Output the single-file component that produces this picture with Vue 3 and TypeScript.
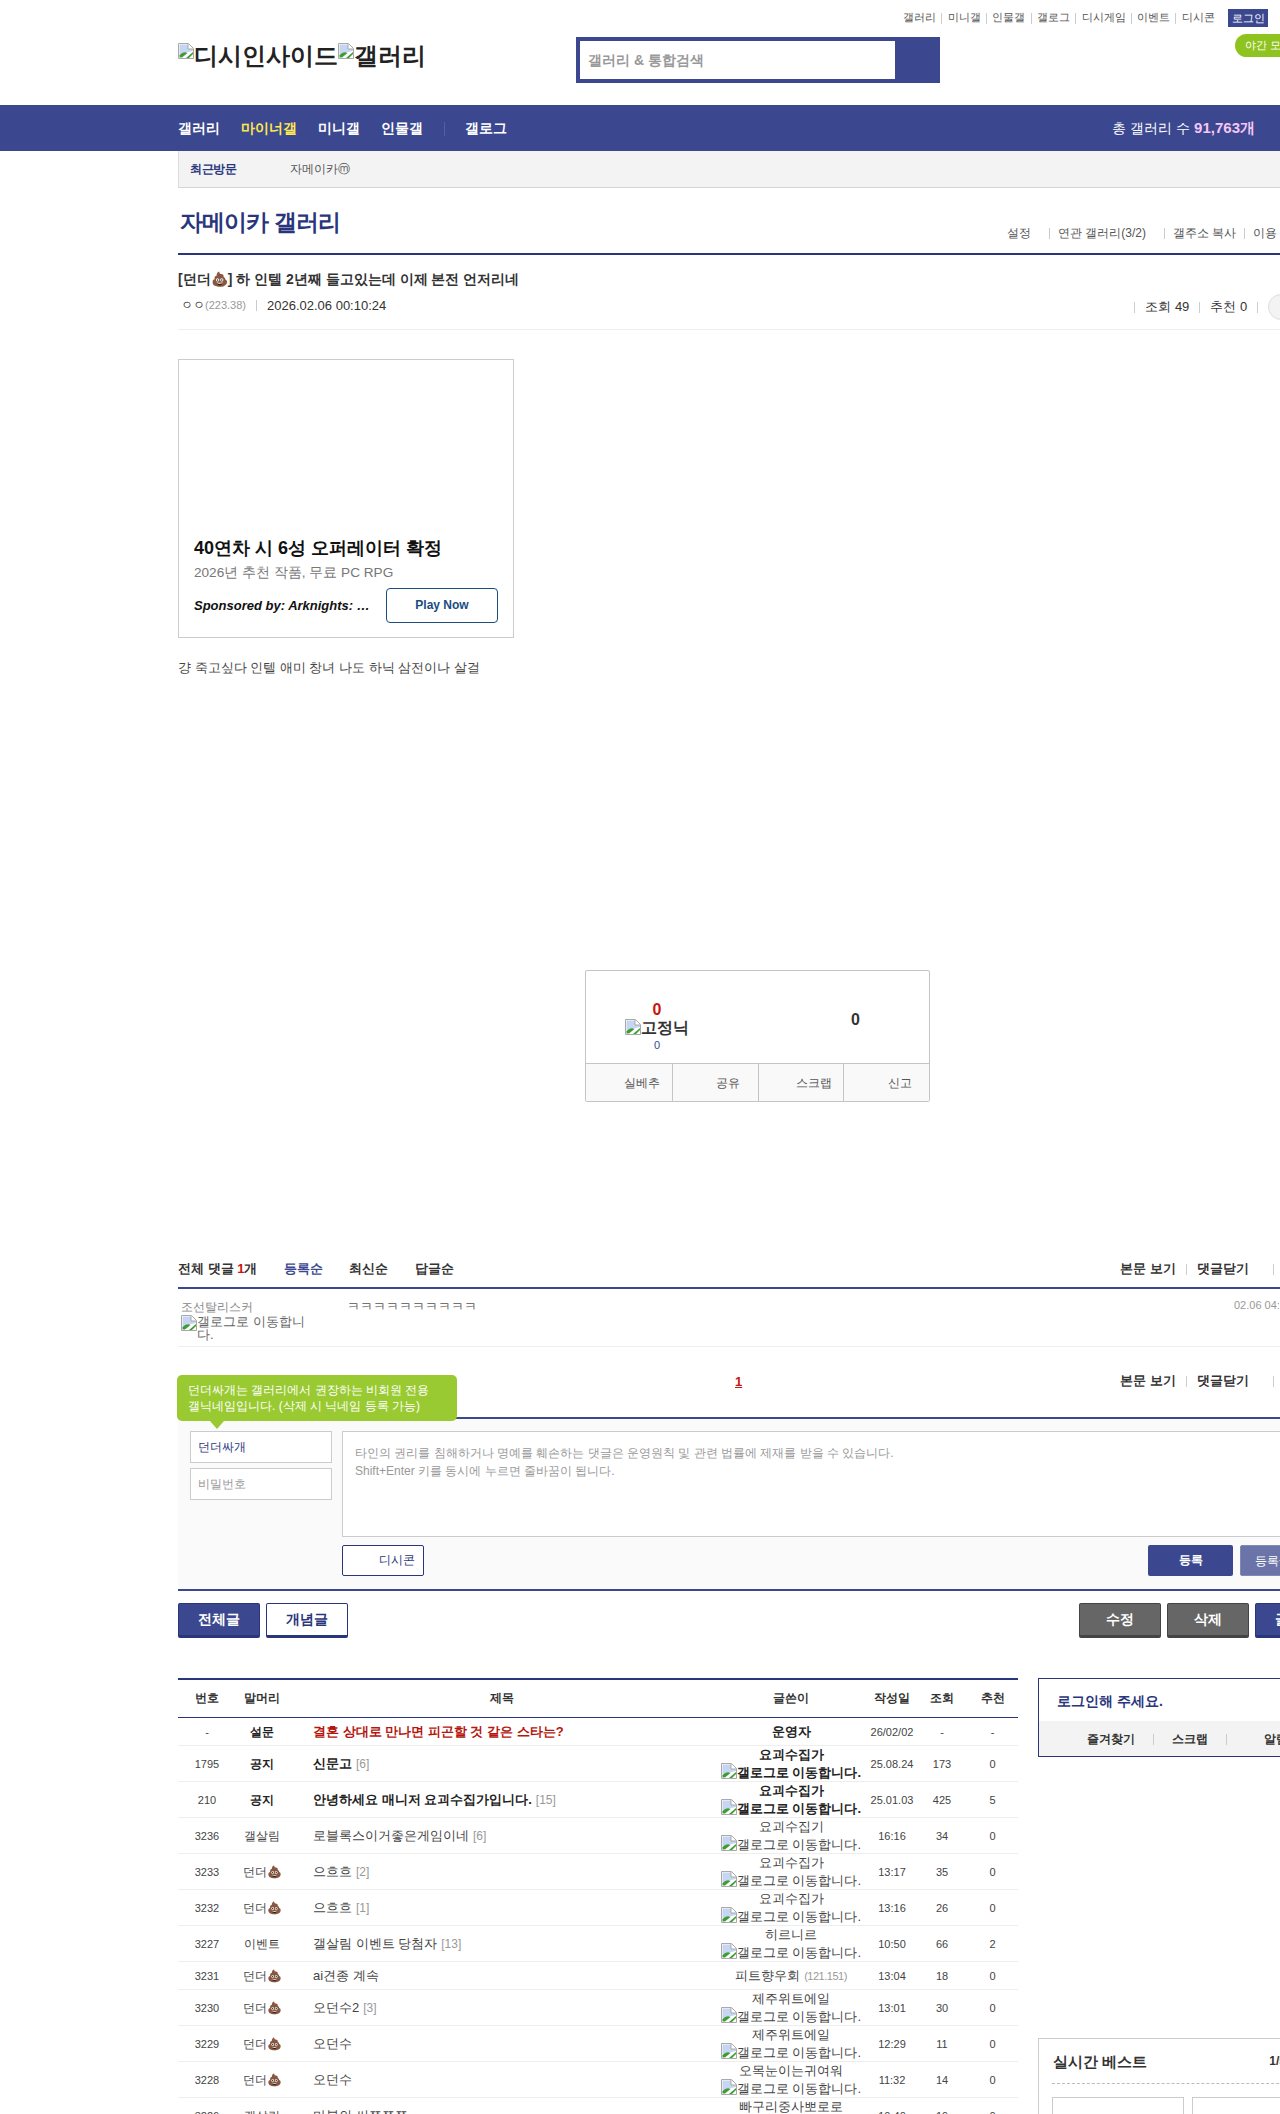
<script setup lang="ts">
import { h } from "vue";

//깨진 이미지 아이콘 (원본에서 이미지가 로드되지 않은 자리)
const BrokenImg = () =>
  h("svg", { class: "broken", width: 16, height: 16, viewBox: "0 0 16 16" }, [
    h("path", { d: "M.5.5H10.5L15.5 5.5V15.5H.5Z", fill: "#fff", stroke: "#a9a9a9" }),
    h("path", { d: "M1.5 1.5H10V6H15V8L6 10L1.5 13Z", fill: "#c5d5f2" }),
    h("path", { d: "M1.5 14.5V12.5C4 9.5 7 8.5 9.5 10L4 14.5Z", fill: "#3f9c35" }),
    h("path", { d: "M10 1V6H15", fill: "#fff", stroke: "#a9a9a9" }),
    h("path", { d: "M8 15L15 9V11L11 15Z", fill: "#3f9c35" }),
  ]);

const topLinks = ["갤러리", "미니갤", "인물갤", "갤로그", "디시게임", "이벤트", "디시콘"];

type Row = {
  no: string;
  head: string;
  poo?: boolean;
  title: string;
  reply?: string;
  writer: string;
  ip?: string;
  noLink?: boolean;
  date: string;
  views: string;
  likes: string;
  bold?: boolean;
};

const rows: Row[] = [
  { no: "-", head: "설문", title: "결혼 상대로 만나면 피곤할 것 같은 스타는?", writer: "운영자", noLink: true, date: "26/02/02", views: "-", likes: "-", bold: true },
  { no: "1795", head: "공지", title: "신문고", reply: "[6]", writer: "요괴수집가", date: "25.08.24", views: "173", likes: "0", bold: true },
  { no: "210", head: "공지", title: "안녕하세요 매니저 요괴수집가입니다.", reply: "[15]", writer: "요괴수집가", date: "25.01.03", views: "425", likes: "5", bold: true },
  { no: "3236", head: "갤살림", title: "로블록스이거좋은게임이네", reply: "[6]", writer: "요괴수집기", date: "16:16", views: "34", likes: "0" },
  { no: "3233", head: "던더", poo: true, title: "으흐흐", reply: "[2]", writer: "요괴수집가", date: "13:17", views: "35", likes: "0" },
  { no: "3232", head: "던더", poo: true, title: "으흐흐", reply: "[1]", writer: "요괴수집가", date: "13:16", views: "26", likes: "0" },
  { no: "3227", head: "이벤트", title: "갤살림 이벤트 당첨자", reply: "[13]", writer: "히르니르", date: "10:50", views: "66", likes: "2" },
  { no: "3231", head: "던더", poo: true, title: "ai견종 계속", writer: "피트향우회", ip: "(121.151)", noLink: true, date: "13:04", views: "18", likes: "0" },
  { no: "3230", head: "던더", poo: true, title: "오던수2", reply: "[3]", writer: "제주위트에일", date: "13:01", views: "30", likes: "0" },
  { no: "3229", head: "던더", poo: true, title: "오던수", writer: "제주위트에일", date: "12:29", views: "11", likes: "0" },
  { no: "3228", head: "던더", poo: true, title: "오던수", writer: "오목눈이는귀여워", date: "11:32", views: "14", likes: "0" },
  { no: "3226", head: "갤살림", title: "마블의 씨쪼쪼쪼", writer: "빠구리중사뽀로로", date: "10:40", views: "19", likes: "0" },
];
</script>

<template>
  <div class="page">
    <header class="top">
      <div class="top-links">
        <template v-for="(l, i) in topLinks" :key="l">
          <i v-if="i" class="sep"></i>
          <span class="tl">{{ l }}</span>
        </template>
        <span class="login-btn">로그인</span>
      </div>
      <div class="top-main">
        <div class="logo">
          <BrokenImg />디시인사이드<BrokenImg />갤러리
        </div>
        <div class="search">
          <div class="search-input">갤러리 &amp; 통합검색</div>
        </div>
        <div class="night">야간 모드</div>
      </div>
    </header>

    <nav class="gnb">
      <div class="gnb-items">
        <span>갤러리</span>
        <span class="on">마이너갤</span>
        <span>미니갤</span>
        <span>인물갤</span>
        <i></i>
        <span>갤로그</span>
      </div>
      <div class="gnb-count">총 갤러리 수 <b>91,763개</b></div>
    </nav>

    <div class="wrap">
      <div class="recent">
        <b>최근방문</b>
        <span>자메이카ⓜ</span>
      </div>

      <div class="gall-head">
        <h2>자메이카 갤러리</h2>
        <div class="gall-links">
          <span class="w-set">설정</span>
          <i class="sep"></i>
          <span>연관 갤러리(3/2)</span>
          <i class="sep wide"></i>
          <span>갤주소 복사</span>
          <i class="sep"></i>
          <span>이용 안내</span>
        </div>
      </div>

      <div class="post-head">
        <h3>[던더💩] 하 인텔 2년째 들고있는데 이제 본전 언저리네</h3>
        <div class="post-meta">
          <span class="nick">ㅇㅇ<em>(223.38)</em></span>
          <i class="sep"></i>
          <span class="date">2026.02.06 00:10:24</span>
          <div class="post-stat">
            <i class="sep"></i>
            <span>조회 49</span>
            <i class="sep"></i>
            <span>추천 0</span>
            <i class="sep"></i>
            <span class="circle"></span>
          </div>
        </div>
      </div>

      <div class="ad">
        <div class="ad-title">40연차 시 6성 오퍼레이터 확정</div>
        <div class="ad-sub">2026년 추천 작품, 무료 PC RPG</div>
        <div class="ad-foot">
          <span class="ad-sponsor">Sponsored by: Arknights: Endfield</span>
          <span class="ad-btn">Play Now</span>
        </div>
      </div>

      <p class="body-text">걍 죽고싶다 인텔 애미 창녀 나도 하닉 삼전이나 살걸</p>

      <div class="reco">
        <div class="reco-top">
          <div class="reco-up">
            <b>0</b>
            <div class="reco-fix"><BrokenImg />고정닉</div>
            <small>0</small>
          </div>
          <div class="reco-down">0</div>
        </div>
        <div class="reco-btns">
          <span>실베추</span>
          <span>공유</span>
          <span>스크랩</span>
          <span>신고</span>
        </div>
      </div>

      <div class="cmt-head">
        <div class="cmt-tabs">
          <b>전체 댓글 <em>1</em>개</b>
          <span class="on">등록순</span>
          <span>최신순</span>
          <span>답글순</span>
        </div>
        <div class="cmt-tools">
          <span>본문 보기</span>
          <i class="sep"></i>
          <span>댓글닫기</span>
          <i class="sep far"></i>
        </div>
      </div>

      <div class="cmt-row">
        <div class="cmt-nick">
          <div>조선탈리스커</div>
          <div class="cmt-gallog"><BrokenImg /><span>갤로그로 이동합니다.</span></div>
        </div>
        <div class="cmt-text">ㅋㅋㅋㅋㅋㅋㅋㅋㅋㅋ</div>
        <div class="cmt-date">02.06 04:21:09</div>
      </div>

      <div class="pager-row">
        <span class="pager-cur">1</span>
        <div class="cmt-tools">
          <span>본문 보기</span>
          <i class="sep"></i>
          <span>댓글닫기</span>
          <i class="sep far"></i>
        </div>
        <div class="tip">던더싸개는 갤러리에서 권장하는 비회원 전용<br />갤닉네임입니다. (삭제 시 닉네임 등록 가능)</div>
      </div>

      <div class="write">
        <div class="write-side">
          <div class="field nick-field">던더싸개</div>
          <div class="field">비밀번호</div>
        </div>
        <div class="write-main">
          <div class="textarea">타인의 권리를 침해하거나 명예를 훼손하는 댓글은 운영원칙 및 관련 법률에 제재를 받을 수 있습니다.<br />Shift+Enter 키를 동시에 누르면 줄바꿈이 됩니다.</div>
          <div class="write-foot">
            <span class="dccon">디시콘</span>
            <span class="submit">등록</span>
            <span class="submit light">등록+추천</span>
          </div>
        </div>
      </div>

      <div class="list-btns">
        <span class="btn navy">전체글</span>
        <span class="btn white">개념글</span>
        <span class="spacer"></span>
        <span class="btn gray">수정</span>
        <span class="btn gray">삭제</span>
        <span class="btn navy">글쓰기</span>
      </div>

      <div class="bottom">
        <table class="list">
          <colgroup>
            <col class="c58" />
            <col class="c52" />
            <col class="c427" />
            <col class="c152" />
            <col class="c50" />
            <col class="c50" />
            <col class="c51" />
          </colgroup>
          <thead>
            <tr>
              <th>번호</th>
              <th>말머리</th>
              <th>제목</th>
              <th>글쓴이</th>
              <th>작성일</th>
              <th>조회</th>
              <th>추천</th>
            </tr>
          </thead>
          <tbody>
            <tr v-for="r in rows" :key="r.no" :class="{ bold: r.bold, short: r.noLink }">
              <td class="num">{{ r.no }}</td>
              <td class="head">{{ r.head }}<template v-if="r.poo">💩</template></td>
              <td class="tit" :class="{ poll: r.no === '-' }">{{ r.title }}<span v-if="r.reply" class="reply">{{ r.reply }}</span></td>
              <td class="writer">
                {{ r.writer }}<span v-if="r.ip" class="ip">{{ r.ip }}</span>
                <div v-if="!r.noLink"><BrokenImg />갤로그로 이동합니다.</div>
              </td>
              <td class="num">{{ r.date }}</td>
              <td class="num">{{ r.views }}</td>
              <td class="num">{{ r.likes }}</td>
            </tr>
          </tbody>
        </table>

        <aside class="side">
          <div class="login-box">
            <div class="login-msg">로그인해 주세요.</div>
            <div class="login-strip">
              <span>즐겨찾기</span>
              <i class="sep"></i>
              <span>스크랩</span>
              <i class="sep"></i>
              <span>알림</span>
            </div>
          </div>
          <div class="best">
            <div class="best-head">
              <b>실시간 베스트</b>
              <span>1/5</span>
            </div>
            <div class="best-cards">
              <div></div>
              <div></div>
            </div>
          </div>
        </aside>
      </div>
    </div>
  </div>
</template>

<style>
body {
  margin: 0;
  background: #fff;
}
</style>

<style scoped>
.page {
  width: 1280px;
  height: 2114px;
  overflow: hidden;
  font-family: "Liberation Sans", sans-serif;
  font-size: 12px;
  color: #333;
}
i {
  font-style: normal;
}
.broken {
  flex: none;
  vertical-align: -2px;
}
.sep {
  display: inline-block;
  width: 1px;
  height: 11px;
  background: #ccc;
}

/* 상단 */
.top {
  height: 105px;
}
.top-links {
  display: flex;
  justify-content: flex-end;
  align-items: center;
  gap: 5.3px;
  height: 18px;
  padding: 9px 12px 0 0;
  font-size: 11px;
  color: #555;
}
.tl {
  margin-top: -2px;
}
.login-btn {
  margin-left: 8px;
  width: 40px;
  height: 18px;
  line-height: 18px;
  text-align: center;
  background: #3b4890;
  color: #fff;
}
.top-main {
  display: flex;
  padding-left: 178px;
  margin-top: 10px;
  position: relative;
}
.logo {
  width: 398px;
  font-size: 24px;
  font-weight: bold;
  line-height: 28px;
  padding-top: 5px;
  color: #222;
}
.logo .broken {
  vertical-align: 5px;
}
.search {
  width: 364px;
  height: 46px;
  box-sizing: border-box;
  background: #3b4890;
  padding: 4px 45px 4px 4px;
}
.search-input {
  height: 38px;
  line-height: 38px;
  background: #fff;
  padding-left: 8px;
  font-size: 14px;
  font-weight: bold;
  color: #999;
}
.night {
  position: absolute;
  left: 1235px;
  top: -3px;
  width: 70px;
  height: 23px;
  line-height: 23px;
  padding-left: 10px;
  border-radius: 12px 0 0 12px;
  background: #8fc31f;
  color: #fff;
  font-size: 11px;
}

/* 메뉴 */
.gnb {
  height: 46px;
  background: #3b4890;
  display: flex;
  align-items: center;
  justify-content: space-between;
  padding: 0 25px 0 178px;
  color: #fff;
}
.gnb-items {
  display: flex;
  align-items: center;
  gap: 21px;
  padding-top: 1px;
  font-size: 14px;
  font-weight: bold;
}
.gnb-items .on {
  color: #ffe84f;
}
.gnb-items i {
  width: 1px;
  height: 14px;
  background: #55619f;
  margin-right: -1px;
}
.gnb-count {
  font-size: 14px;
  padding-top: 1px;
}
.gnb-count b {
  font-size: 15px;
  color: #f5c6f5;
}

.wrap {
  margin-left: 178px;
  width: 1160px;
}

.recent {
  height: 36px;
  background: #f3f3f3;
  border-left: 1px solid #ddd;
  border-bottom: 1px solid #d5d5d5;
  display: flex;
  align-items: center;
  padding-left: 11px;
  font-size: 12px;
}
.recent b {
  width: 100px;
  color: #29367c;
  letter-spacing: -0.5px;
}
.recent span {
  color: #555;
}

.gall-head {
  height: 67px;
  box-sizing: border-box;
  border-bottom: 2px solid #29367c;
  display: flex;
  justify-content: space-between;
  position: relative;
}
.gall-head h2 {
  margin: 18px 0 0 2px;
  font-size: 23px;
  line-height: 32px;
  font-weight: bold;
  letter-spacing: -0.9px;
  color: #29367c;
}
.gall-links {
  display: flex;
  align-items: center;
  gap: 8px;
  height: 18px;
  margin-top: 36px;
  width: 331px;
  color: #555;
  font-size: 12px;
}
.gall-links .w-set {
  margin-right: 10px;
}
.gall-links .wide {
  margin-left: 10px;
}

.post-head {
  height: 75px;
  box-sizing: border-box;
  border-bottom: 1px solid #eee;
  padding-top: 14px;
}
.post-head h3 {
  margin: 0;
  font-size: 14px;
  line-height: 20px;
  font-weight: bold;
  color: #333;
}
.post-meta {
  display: flex;
  align-items: center;
  margin-top: 7px;
  height: 18px;
  padding-left: 3px;
  gap: 10px;
}
.nick {
  font-size: 12px;
}
.nick em {
  font-style: normal;
  font-size: 11px;
  color: #999;
}
.date {
  font-size: 13px;
}
.post-stat {
  display: flex;
  align-items: center;
  gap: 10px;
  margin-left: 738px;
  margin-top: 4px;
  font-size: 13px;
}
.post-stat .circle {
  width: 24px;
  height: 24px;
  border-radius: 50%;
  background: #f3f3f3;
  border: 1px solid #ddd;
}

.ad {
  width: 336px;
  height: 279px;
  box-sizing: border-box;
  border: 1px solid #ccc;
  margin-top: 29px;
  padding: 175px 15px 0;
}
.ad-title {
  font-size: 18px;
  line-height: 26px;
  font-weight: bold;
  color: #111;
}
.ad-sub {
  font-size: 13.6px;
  line-height: 20px;
  margin-top: 2px;
  color: #777;
}
.ad-foot {
  display: flex;
  align-items: center;
  justify-content: space-between;
  margin-top: 5px;
}
.ad-sponsor {
  width: 183px;
  font-size: 13px;
  font-weight: bold;
  font-style: italic;
  color: #111;
  white-space: nowrap;
  overflow: hidden;
  text-overflow: ellipsis;
}
.ad-btn {
  width: 112px;
  height: 35px;
  box-sizing: border-box;
  line-height: 33px;
  text-align: center;
  border: 1px solid #1a4c80;
  border-radius: 4px;
  color: #1a4c80;
  font-weight: bold;
}

.body-text {
  margin: 21px 0 0;
  font-size: 13px;
  line-height: 18px;
  color: #444;
}

.reco {
  width: 345px;
  height: 132px;
  box-sizing: border-box;
  margin: 293px 0 0 407px;
  border: 1px solid #c4c4c4;
  border-radius: 2px;
  display: flex;
  flex-direction: column;
}
.reco-top {
  height: 93px;
  position: relative;
  display: flex;
}
.reco-up {
  width: 142px;
  padding-top: 30px;
  text-align: center;
  box-sizing: border-box;
}
.reco-up b {
  display: block;
  font-size: 16px;
  line-height: 18px;
  color: #c8150f;
}
.reco-fix {
  font-size: 16px;
  font-weight: bold;
  line-height: 18px;
  white-space: nowrap;
  color: #333;
}
.reco-up small {
  display: block;
  font-size: 11px;
  line-height: 16px;
  color: #3b4890;
}
.reco-down {
  margin-left: 123px;
  padding-top: 39px;
  font-size: 16px;
  font-weight: bold;
  line-height: 20px;
}
.reco-btns {
  flex: 1;
  display: grid;
  grid-template-columns: repeat(4, 1fr);
  border-top: 1px solid #c4c4c4;
  background: #f9f9f9;
}
.reco-btns span {
  text-align: center;
  padding: 1px 0 0 26px;
  line-height: 36px;
  color: #555;
  font-size: 12px;
  border-left: 1px solid #c4c4c4;
}
.reco-btns span:first-child {
  border-left: 0;
}

.cmt-head {
  margin-top: 153px;
  height: 32px;
  border-bottom: 2px solid #3b4890;
  display: flex;
  justify-content: space-between;
}
.cmt-tabs {
  display: flex;
  gap: 26.5px;
  font-size: 13px;
  font-weight: bold;
  line-height: 28px;
}
.cmt-tabs em {
  font-style: normal;
  color: #c8150f;
}
.cmt-tabs .on {
  color: #3b4890;
}
.cmt-tools {
  display: flex;
  align-items: center;
  gap: 10px;
  height: 24px;
  padding-left: 942px;
  font-size: 13px;
  font-weight: bold;
}
.cmt-head .cmt-tools {
  padding-left: 0;
  margin-right: 64px;
  height: 28px;
}
.cmt-tools .far {
  margin-left: 14px;
}
.cmt-row {
  height: 58px;
  box-sizing: border-box;
  border-bottom: 1px solid #eee;
  display: flex;
  position: relative;
  padding: 10px 0 0 3px;
  color: #888;
}
.cmt-nick {
  width: 166px;
  font-size: 12px;
  line-height: 16px;
}
.cmt-gallog {
  display: flex;
  width: 128px;
  color: #666;
  font-size: 13px;
  line-height: 13px;
}
.cmt-text {
  color: #555;
  font-size: 13px;
  line-height: 16px;
}
.cmt-date {
  position: absolute;
  left: 1056px;
  top: 10px;
  font-size: 11px;
  color: #999;
}

.pager-row {
  height: 72px;
  box-sizing: border-box;
  border-bottom: 2px solid #3b4890;
  position: relative;
  padding-top: 22px;
}
.pager-cur {
  position: absolute;
  left: 557px;
  top: 27px;
  font-size: 13px;
  font-weight: bold;
  color: #c8150f;
  text-decoration: underline;
}
.tip {
  position: absolute;
  left: -1px;
  top: 28px;
  width: 280px;
  height: 46px;
  box-sizing: border-box;
  padding: 7px 11px;
  border-radius: 5px;
  background: #9aca32;
  color: #fff;
  font-size: 12px;
  line-height: 16px;
  white-space: nowrap;
}
.tip::after {
  content: "";
  position: absolute;
  left: 33px;
  top: 46px;
  border: 7px solid transparent;
  border-bottom: 0;
  border-top: 8px solid #9aca32;
}

.write {
  height: 172px;
  box-sizing: border-box;
  background: #fafafa;
  border-bottom: 2px solid #3b4890;
  display: flex;
  padding: 12px 0 0 12px;
}
.write-side {
  width: 152px;
  display: flex;
  flex-direction: column;
  gap: 5px;
}
.field {
  width: 142px;
  height: 32px;
  box-sizing: border-box;
  border: 1px solid #ccc;
  background: #fff;
  padding-left: 7px;
  line-height: 30px;
  color: #999;
  font-size: 12px;
}
.nick-field {
  color: #29367c;
}
.write-main {
  width: 996px;
}
.textarea {
  height: 106px;
  box-sizing: border-box;
  border: 1px solid #ccc;
  background: #fff;
  padding: 12px;
  color: #999;
  font-size: 12px;
  line-height: 18px;
}
.write-foot {
  display: flex;
  align-items: center;
  margin-top: 8px;
  gap: 7px;
}
.dccon {
  width: 82px;
  height: 31px;
  box-sizing: border-box;
  border: 1px solid #29367c;
  border-radius: 2px;
  background: #fff;
  color: #29367c;
  line-height: 29px;
  padding-left: 36px;
  margin-right: 717px;
}
.submit {
  width: 85px;
  height: 31px;
  line-height: 31px;
  border-radius: 2px;
  text-align: center;
  background: #3b4890;
  color: #fff;
  font-weight: bold;
  flex: none;
}
.submit.light {
  background: #6a74a8;
  border: 1px solid #8088b4;
  box-sizing: border-box;
  font-weight: normal;
}

.list-btns {
  display: flex;
  gap: 6px;
  margin-top: 12px;
  width: 1160px;
}
.spacer {
  width: 719px;
}
.btn {
  flex: none;
  width: 82px;
  height: 35px;
  box-sizing: border-box;
  line-height: 31px;
  text-align: center;
  border-radius: 2px;
  font-size: 14px;
  font-weight: bold;
  border: 1px solid;
  border-bottom-width: 3px;
}
.btn.navy {
  background: #3b4890;
  border-color: #29367c;
  color: #fff;
}
.btn.white {
  background: #fff;
  border-color: #29367c;
  color: #29367c;
}
.btn.gray {
  background: #666;
  border-color: #444;
  color: #fff;
}

.bottom {
  display: flex;
  margin-top: 40px;
  gap: 20px;
}
.list {
  width: 840px;
  flex: none;
  table-layout: fixed;
  border-collapse: collapse;
  border-top: 2px solid #29367c;
  align-self: flex-start;
}
.c58 { width: 58px; }
.c52 { width: 52px; }
.c427 { width: 427px; }
.c152 { width: 152px; }
.c50 { width: 50px; }
.c51 { width: 51px; }
.list th {
  height: 37px;
  padding: 0;
  font-size: 12px;
  font-weight: bold;
  border-bottom: 1px solid #29367c;
}
.list td {
  height: 35px;
  padding: 0;
  text-align: center;
  border-bottom: 1px solid #eee;
  color: #444;
  font-size: 13px;
  line-height: 16px;
}
.list tr.short td {
  height: 27px;
}
.list td.num {
  font-size: 11px;
}
.list td.tit {
  text-align: left;
  padding-left: 25px;
}
.list td.head {
  font-size: 12px;
  white-space: nowrap;
}
.list td.writer {
  white-space: nowrap;
}
.list tr.bold td:not(.num) {
  font-weight: bold;
  color: #222;
}
.list td.tit.poll {
  color: #b5160e !important;
}
.reply {
  font-weight: normal;
  color: #999;
  font-size: 12px;
  margin-left: 4px;
}
.ip {
  font-size: 11px;
  letter-spacing: -0.5px;
  margin-left: 4px;
  color: #999;
}

.side {
  width: 300px;
  flex: none;
}
.login-box {
  height: 79px;
  box-sizing: border-box;
  border: 1px solid #29367c;
  display: flex;
  flex-direction: column;
}
.login-msg {
  height: 42px;
  line-height: 44px;
  padding-left: 18px;
  font-size: 14px;
  font-weight: bold;
  color: #29367c;
}
.login-strip {
  flex: 1;
  background: #f3f3f3;
  display: flex;
  align-items: center;
  padding: 2px 0 0 48px;
  gap: 18px;
  font-size: 12px;
  font-weight: bold;
}
.login-strip i:last-of-type {
  margin-right: 19px;
}
.best {
  margin-top: 281px;
  border: 1px solid #ccc;
  padding: 0 13px;
}
.best-head {
  height: 44px;
  display: flex;
  justify-content: space-between;
  align-items: center;
  border-bottom: 1px dashed #bbb;
}
.best-head b {
  font-size: 15px;
  padding-top: 3px;
  padding-left: 1px;
}
.best-head span {
  font-weight: bold;
  font-size: 12px;
  margin-right: 38px;
}
.best-cards {
  display: flex;
  gap: 8px;
  margin-top: 13px;
}
.best-cards div {
  width: 130px;
  height: 120px;
  border: 1px solid #ccc;
  flex: none;
}
</style>
